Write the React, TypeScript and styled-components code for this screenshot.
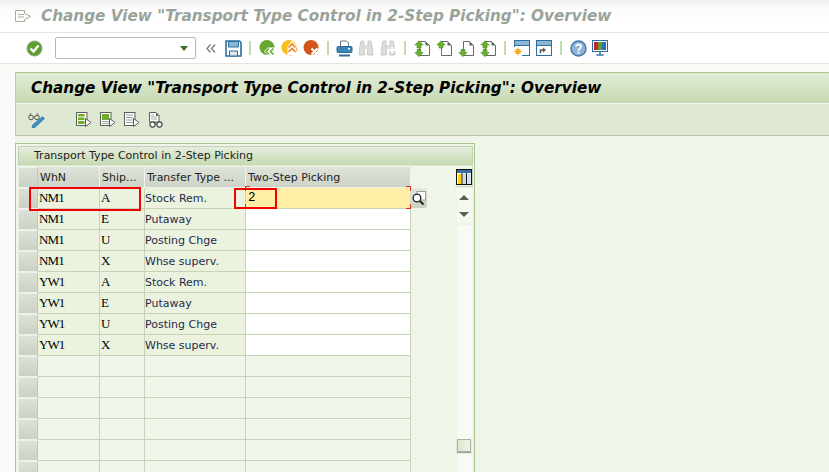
import React from 'react';
import styled, { createGlobalStyle } from 'styled-components';

const Global = createGlobalStyle`
  html, body { margin: 0; padding: 0; background: #fafbf8; }
  * { box-sizing: border-box; }
`;

const Page = styled.div`
  position: relative;
  width: 829px;
  height: 472px;
  overflow: hidden;
  background: #fafbf8;
  font-family: "DejaVu Sans", Verdana, sans-serif;
  color: #222;
`;

const TitleBar = styled.div`
  height: 33px;
  display: flex;
  align-items: center;
  gap: 10px;
  padding: 0 0 0 15px;
  background: linear-gradient(#eef1ec 0, #fbfcfb 9px, #ffffff 24px);
  border-bottom: 1px solid #e2e5df;
`;

const WindowTitle = styled.div`
  font-size: 15.25px;
  font-weight: 700;
  font-style: italic;
  color: #9aa39a;
  white-space: nowrap;
`;

const Toolbar = styled.div`
  height: 31px;
  display: flex;
  align-items: center;
  padding-left: 23px;
  background: #fff;
  border-bottom: 1px solid #e2e5df;
`;

const ToolButton = styled.div`
  width: 22px;
  height: 22px;
  display: flex;
  align-items: center;
  justify-content: center;
  flex: none;
`;

const Separator = styled.div<{ $w?: number }>`
  width: ${p => p.$w ?? 12}px;
  flex: none;
  display: flex;
  justify-content: center;
  &::before {
    content: '';
    width: 2px;
    height: 14px;
    background: #c5dbb0;
  }
`;

const CommandField = styled.div`
  width: 141px;
  height: 22px;
  margin: 0 4px 0 10px;
  border: 1px solid #b4b8b0;
  border-radius: 2px;
  background: #fff;
  display: flex;
  align-items: center;
  justify-content: flex-end;
  padding-right: 7px;
  flex: none;
  &::after {
    content: '';
    border-left: 4px solid transparent;
    border-right: 4px solid transparent;
    border-top: 5px solid #3f6b2c;
  }
`;

const Band = styled.div`
  height: 8px;
  background: #f8faf6;
`;

const Content = styled.div`
  margin-left: 15px;
  height: 400px;
  background: #eff5e9;
`;

const ScreenHeader = styled.div`
  height: 32px;
  display: flex;
  align-items: center;
  padding-left: 15px;
  background: linear-gradient(#e3ecd8 0, #c6d9b2 100%);
  border-top: 1px solid #a9c592;
  border-left: 1px solid #b9cfa5;
  border-bottom: 1px solid #f3f7ee;
  font-size: 15.25px;
  font-weight: 700;
  font-style: italic;
  color: #000;
  white-space: nowrap;
`;

const AppToolbar = styled.div`
  height: 32px;
  display: flex;
  align-items: center;
  padding-left: 8px;
  background: #dfe8d2;
  border-left: 1px solid #b9cfa5;
  border-bottom: 1px solid #b6caa4;
`;

const AppButton = styled.div<{ $gap?: number }>`
  width: 24px;
  height: 24px;
  margin-left: ${p => p.$gap ?? 0}px;
  display: flex;
  align-items: center;
  justify-content: center;
  flex: none;
`;

const TablePanel = styled.div`
  width: 460px;
  height: 340px;
  margin-top: 7px;
  border: 1px solid #a7c58e;
  border-bottom: none;
  padding: 2px 1px 0 2px;
`;

const PanelTitle = styled.div`
  height: 20px;
  display: flex;
  align-items: center;
  padding: 0 0 2px 15px;
  font-size: 11px;
  color: #222;
  background: linear-gradient(#e6eedd, #c6d9b2);
  border: 1px solid #c3d0b6;
  border-bottom-color: #dbe6cf;
  white-space: nowrap;
`;

const TableArea = styled.div`
  display: flex;
  margin-top: 1px;
`;

const Grid = styled.div`
  width: 393px;
  display: grid;
  grid-template-columns: 20px 62px 45px 101px 165px;
  grid-auto-rows: 21px;
  flex: none;
`;

const HeaderCell = styled.div`
  display: flex;
  align-items: center;
  padding-left: 2px;
  font-size: 11px;
  color: #222;
  white-space: nowrap;
  overflow: hidden;
  background: linear-gradient(#dfe3da, #cdd3c6);
  border-right: 1px solid #f2f4ef;
  border-bottom: 1px solid #eef1ea;
`;

const RowHandle = styled.div`
  background: linear-gradient(#dde1d8, #cbd1c4);
  border: 1px solid #eef1ea;
  border-right: 1px solid #b9ceaa;
  border-left: 1px solid #e8eee2;
`;

const Cell = styled.div<{ $kind: 'code' | 'text' | 'input' | 'focus' | 'empty' }>`
  display: flex;
  align-items: center;
  padding-left: ${p => (p.$kind === 'focus' ? 2 : p.$kind === 'text' ? 0 : 1)}px;
  white-space: nowrap;
  overflow: hidden;
  font-size: ${p => (p.$kind === 'code' ? 13 : p.$kind === 'focus' ? 12.5 : 11)}px;
  letter-spacing: ${p => (p.$kind === 'code' ? '-0.9px' : 'normal')};
  font-family: ${p =>
    p.$kind === 'code' ? '"Liberation Serif", serif' : p.$kind === 'focus' ? '"Liberation Mono", monospace' : 'inherit'};
  color: ${p => (p.$kind === 'text' ? '#1f2a4a' : '#000')};
  background: ${p =>
    p.$kind === 'input' ? '#fff' : p.$kind === 'focus' ? '#ffeea3' : p.$kind === 'empty' ? '#eff5e9' : '#ebf3df'};
  border-right: 1px solid #c5d3b7;
  border-bottom: 1px solid #c5d3b7;
`;

const ValueHelp = styled.div`
  position: absolute;
  left: 410px;
  top: 188px;
  width: 17px;
  height: 20px;
  display: flex;
  align-items: center;
  justify-content: center;
  background: linear-gradient(#e4e8de, #c9cfc2);
  border-radius: 0 2px 2px 0;
`;

const Corner = styled.div<{ $x: number; $y: number; $flipX?: boolean; $flipY?: boolean }>`
  position: absolute;
  left: ${p => p.$x}px;
  top: ${p => p.$y}px;
  width: 5px;
  height: 5px;
  border-color: #e03020;
  border-style: solid;
  border-width: ${p => (p.$flipY ? '0 0 1px' : '1px 0 0')};
  border-left-width: ${p => (p.$flipX ? 0 : 1)}px;
  border-right-width: ${p => (p.$flipX ? 1 : 0)}px;
`;

const ScrollColumn = styled.div`
  margin-left: 44px;
  width: 18px;
  display: flex;
  flex-direction: column;
  align-items: center;
`;

const ConfigButton = styled.div`
  width: 18px;
  height: 20px;
  display: flex;
  align-items: center;
  justify-content: center;
  border-right: 1px solid #c9cfc2;
  border-bottom: 1px solid #c9cfc2;
`;

const ScrollButton = styled.div<{ $up?: boolean }>`
  width: 15px;
  height: 16px;
  margin-top: ${p => (p.$up ? 2 : 1)}px;
  display: flex;
  align-items: center;
  justify-content: center;
  background: #f6f9f2;
  &::after {
    content: '';
    border-left: 5px solid transparent;
    border-right: 5px solid transparent;
    border-${p => (p.$up ? 'bottom' : 'top')}: 5px solid #56614f;
  }
`;

const ScrollTrack = styled.div`
  width: 15px;
  height: 270px;
  margin-top: 3px;
  padding-top: 214px;
  background: #f8faf6;
  display: flex;
  justify-content: center;
`;

const ScrollThumb = styled.div`
  width: 14px;
  height: 13px;
  background: linear-gradient(90deg, #dbe6cf, #eef4e6);
  border: 1px solid #a9b3a0;
  box-shadow: 0 1px 1px #9aa392;
`;

const Highlight = styled.div<{ $x: number; $y: number; $w: number; $h: number }>`
  position: absolute;
  left: ${p => p.$x}px;
  top: ${p => p.$y}px;
  width: ${p => p.$w}px;
  height: ${p => p.$h}px;
  border: 2px solid #f00000;
`;

const Check = () => (
  <svg width="17" height="17" viewBox="0 0 17 17">
    <circle cx="8.5" cy="8.5" r="7.5" fill="#5f9f32" stroke="#8fa584" strokeWidth="1" />
    <path d="M4.500 8.500l3 3 5-6" fill="none" stroke="#fff" strokeWidth="2.400" />
  </svg>
);

const DoubleLeft = () => (
  <svg width="10" height="9" viewBox="0 0 10 9">
    <path d="M4.500.5L1 4.500l3.500 4M9 .5L5.500 4.500 9 8.500" fill="none" stroke="#767d74" strokeWidth="1.300" />
  </svg>
);

const Save = () => (
  <svg width="17" height="17" viewBox="0 0 17 17">
    <path d="M1 1h13.500L16 2.500V16H1z" fill="#fff" stroke="#2a6f9e" strokeWidth="1.600" />
    <path d="M3.500 1.500h10v5.500h-10z" fill="#8eb6d3" stroke="#2a6f9e" />
    <path d="M4.500 11h8v5h-8z" fill="#dce7ef" stroke="#2a6f9e" />
  </svg>
);

const Back = () => (
  <svg width="17" height="16" viewBox="0 0 17 16">
    <circle cx="8" cy="7.500" r="7.500" fill="#66a832" />
    <path d="M5 11.500l4-4h7v8H9z" fill="#fff" />
    <path d="M10 8.500l-3 3 3 3M14.500 8.500l-3 3 3 3" fill="none" stroke="#66a832" strokeWidth="1.600" />
  </svg>
);

const Exit = () => (
  <svg width="17" height="16" viewBox="0 0 17 16">
    <circle cx="8" cy="7.500" r="7.500" fill="#fbbb1b" />
    <path d="M16 7.500A7.500 7.500 0 0 1 8 15" fill="none" stroke="#ee7f1a" strokeWidth="1.500" />
    <path d="M11 1l4.500 5v9.500h-9V6z" fill="#fff" />
    <path d="M7.500 7.500l3.500-3.500 3.500 3.500M7.500 12l3.500-3.500 3.500 3.500" fill="none" stroke="#ee7f1a" strokeWidth="1.600" />
  </svg>
);

const Cancel = () => (
  <svg width="17" height="16" viewBox="0 0 17 16">
    <circle cx="8" cy="7.500" r="7.500" fill="#d2551c" />
    <path d="M8.500 8.500l6 6M14.500 8.500l-6 6" stroke="#fff" strokeWidth="2.200" />
  </svg>
);

const Print = () => (
  <svg width="17" height="17" viewBox="0 0 17 17">
    <path d="M4.500 6.500V1h6l2 2v3.500" fill="#fff" stroke="#6c7478" />
    <rect x="1" y="6.500" width="15" height="6" rx="1" fill="#3b86b4" stroke="#2a6f9e" />
    <rect x="12" y="8" width="2" height="1.500" fill="#fff" />
    <path d="M3 14.500h11v2H3z" fill="#2a6f9e" />
  </svg>
);

const Find = ({ plus }: { plus?: boolean }) => (
  <svg width="16" height="16" viewBox="0 0 16 16">
    <path d="M2 6l1-5h3v5l.5 9H1zM14 6l-1-5h-3v5l-.5 9H15z" fill="#dcdedb" stroke="#c8cbc6" />
    <rect x="6" y="5" width="4" height="4" fill="#dcdedb" />
    {plus && <path d="M12 7v6M9 10h6" stroke="#fff" strokeWidth="2" />}
  </svg>
);

const upArrow = 'M5 .8L9.200 5H7v3H3V5H.8z';
const downArrow = 'M3 9.500h4v3h2.200L5 16.700.8 12.500H3z';

const PageArrows = ({ up, down }: { up?: boolean; down?: boolean }) => (
  <svg width="17" height="17" viewBox="0 0 17 17">
    <path d="M5.500 1.500h6l4 4v10h-10z" fill="#fff" stroke="#666a66" />
    <path d="M11.500 1.500v4h4z" fill="#666a66" />
    {up && <path d={upArrow} fill="#6cb02e" stroke="#3f7a22" strokeWidth=".5" />}
    {down && <path d={downArrow} fill="#6cb02e" stroke="#3f7a22" strokeWidth=".5" />}
  </svg>
);

const NewSession = () => (
  <svg width="16" height="16" viewBox="0 0 16 16">
    <rect x=".5" y=".5" width="15" height="15" fill="#fff" stroke="#2a6f9e" />
    <rect x="1" y="1" width="14" height="4" fill="#8eb6d3" />
    <path d="M0 5.500h16" stroke="#2a6f9e" />
    <rect x="0" y="7" width="8" height="9" fill="#fff" />
    <circle cx="4" cy="11.500" r="2.500" fill="#f7a81b" />
    <path d="M4 7.500v8M0 11.500h8M1.500 9l5 5M6.500 9l-5 5" stroke="#f7a81b" />
  </svg>
);

const Shortcut = () => (
  <svg width="16" height="16" viewBox="0 0 16 16">
    <rect x=".5" y=".5" width="15" height="15" fill="#fff" stroke="#2a6f9e" />
    <rect x="1" y="1" width="14" height="4" fill="#8eb6d3" />
    <path d="M0 5.500h16" stroke="#2a6f9e" />
    <path d="M4.500 13v-3h3" fill="none" stroke="#555" strokeWidth="1.600" />
    <path d="M7 7.500l3 2.500-3 2.500z" fill="#555" />
  </svg>
);

const Help = () => (
  <svg width="17" height="17" viewBox="0 0 17 17">
    <circle cx="8.500" cy="8.500" r="7.500" fill="#8fb3d4" stroke="#3c79a8" strokeWidth="1.400" />
    <path d="M6 6.500C6 3.800 11 3.800 11 6.500c0 2-2.500 1.800-2.500 4" fill="none" stroke="#fff" strokeWidth="1.800" />
    <rect x="7.500" y="11.500" width="2" height="2" fill="#fff" />
  </svg>
);

const Layout = () => (
  <svg width="16" height="16" viewBox="0 0 16 16">
    <rect x=".5" y=".5" width="15" height="11" fill="#fff" stroke="#2a6f9e" />
    <rect x="2" y="2" width="4" height="8" fill="#c9252b" />
    <rect x="6" y="2" width="4" height="8" fill="#5f9f32" />
    <rect x="10" y="2" width="4" height="8" fill="#2f6fb3" />
    <path d="M8 12v2M4.500 15h7" stroke="#2a6f9e" strokeWidth="1.600" />
  </svg>
);

const Doc = ({ fill }: { fill: 'lines' | 'block' | 'none' }) => (
  <svg width="16" height="15" viewBox="0 0 16 15">
    <rect x=".5" y=".5" width="10.500" height="13" fill="#fff" stroke="#5b5f5b" />
    {fill === 'lines' && <path d="M2 2h6.500v2.500H2zM2 5.500h6.500V8H2zM2 9h6.500v3H2z" fill="#6fae2a" />}
    {fill === 'block' && (
      <>
        <path d="M2 2h7v6H2z" fill="#6fae2a" />
        <path d="M2 9.500h7M2 11.500h7" stroke="#8a8e8a" strokeWidth=".8" />
      </>
    )}
    {fill === 'none' && <path d="M2 3h7M2 5.500h7M2 8h7M2 10.500h7" stroke="#9a9e9a" strokeWidth="1" />}
    <path d="M9.500 6.500l5.500 4-5.500 4z" fill="#fff" stroke="#5b5f5b" />
  </svg>
);

const GlassesDoc = () => (
  <svg width="16" height="16" viewBox="0 0 16 16">
    <path d="M1.500.5H8l3 3V10H1.500z" fill="#fff" stroke="#5b5f5b" />
    <path d="M8 .5V4h3z" fill="#5b5f5b" />
    <path d="M3 3h3M3 5h6M3 7h6" stroke="#8a8e8a" strokeWidth=".8" />
    <circle cx="4.500" cy="12.500" r="2.600" fill="#fff" stroke="#444" strokeWidth="1.100" />
    <circle cx="11.500" cy="12.500" r="2.600" fill="#fff" stroke="#444" strokeWidth="1.100" />
    <path d="M7 12h2" stroke="#444" />
  </svg>
);

const GlassesPencil = () => (
  <svg width="17" height="16" viewBox="0 0 17 16">
    <circle cx="3" cy="5.500" r="2.300" fill="none" stroke="#555" />
    <circle cx="9" cy="5.500" r="2.300" fill="none" stroke="#555" />
    <path d="M5.300 5h1.400M1.500 3.500L3 1M10.500 3.500L9 1" stroke="#555" strokeWidth=".8" />
    <path d="M14.500 4.500L16.500 6.500 7 15.500 4 16l.5-3z" fill="#3d8fc4" stroke="#2a6f9e" strokeWidth=".6" />
  </svg>
);

const WindowIcon = () => (
  <svg width="16" height="13" viewBox="0 0 16 13">
    <path d="M.5.5h9v3l6 3-6 3v2h-9z" fill="none" stroke="#9fb08f" />
    <path d="M3 4.500h6M3 7h6" stroke="#9fb08f" />
  </svg>
);

const Magnifier = () => (
  <svg width="15" height="15" viewBox="0 0 15 15">
    <rect x="6" y=".5" width="8.500" height="8.500" fill="#fff" stroke="#9aa392" />
    <circle cx="6" cy="7" r="3.800" fill="#fff" stroke="#222" strokeWidth="1.300" />
    <path d="M9 10l3.500 3.500" stroke="#222" strokeWidth="2" />
  </svg>
);

const TableConfig = () => (
  <svg width="16" height="16" viewBox="0 0 16 16">
    <rect x=".5" y=".5" width="15" height="15" fill="#fff" stroke="#111" />
    <rect x="1" y="1" width="14" height="3" fill="#3b6ea5" />
    <rect x="2" y="5" width="3.500" height="10" fill="#ffd21f" />
    <path d="M6 4v11M10.500 4v11" stroke="#111" />
    <rect x="7" y="5" width="3" height="10" fill="#c9dbe9" />
    <rect x="11.500" y="5" width="3" height="10" fill="#c9dbe9" />
  </svg>
);

const title = 'Change View "Transport Type Control in 2-Step Picking": Overview';

const rows = [
  ['NM1', 'A', 'Stock Rem.'],
  ['NM1', 'E', 'Putaway'],
  ['NM1', 'U', 'Posting Chge'],
  ['NM1', 'X', 'Whse superv.'],
  ['YW1', 'A', 'Stock Rem.'],
  ['YW1', 'E', 'Putaway'],
  ['YW1', 'U', 'Posting Chge'],
  ['YW1', 'X', 'Whse superv.'],
];

const emptyRows = [0, 1, 2, 3, 4, 5, 6];

export default function App() {
  return (
    <Page>
      <Global />
      <TitleBar>
        <WindowIcon />
        <WindowTitle>{title}</WindowTitle>
      </TitleBar>
      <Toolbar>
        <ToolButton><Check /></ToolButton>
        <CommandField />
        <ToolButton><DoubleLeft /></ToolButton>
        <ToolButton><Save /></ToolButton>
        <Separator />
        <ToolButton><Back /></ToolButton>
        <ToolButton><Exit /></ToolButton>
        <ToolButton><Cancel /></ToolButton>
        <Separator $w={11} />
        <ToolButton><Print /></ToolButton>
        <ToolButton><Find /></ToolButton>
        <ToolButton><Find plus /></ToolButton>
        <Separator />
        <ToolButton><PageArrows up down /></ToolButton>
        <ToolButton><PageArrows up /></ToolButton>
        <ToolButton><PageArrows down /></ToolButton>
        <ToolButton><PageArrows up down /></ToolButton>
        <Separator />
        <ToolButton><NewSession /></ToolButton>
        <ToolButton><Shortcut /></ToolButton>
        <Separator />
        <ToolButton><Help /></ToolButton>
        <ToolButton><Layout /></ToolButton>
      </Toolbar>
      <Band />
      <Content>
        <ScreenHeader>{title}</ScreenHeader>
        <AppToolbar>
          <AppButton><GlassesPencil /></AppButton>
          <AppButton $gap={24}><Doc fill="lines" /></AppButton>
          <AppButton><Doc fill="block" /></AppButton>
          <AppButton><Doc fill="none" /></AppButton>
          <AppButton><GlassesDoc /></AppButton>
        </AppToolbar>
        <TablePanel>
          <PanelTitle>Transport Type Control in 2-Step Picking</PanelTitle>
          <TableArea>
            <Grid>
              <RowHandle />
              <HeaderCell>WhN</HeaderCell>
              <HeaderCell>Ship...</HeaderCell>
              <HeaderCell>Transfer Type ...</HeaderCell>
              <HeaderCell>Two-Step Picking</HeaderCell>
              {rows.map((r, i) => (
                <React.Fragment key={i}>
                  <RowHandle />
                  <Cell $kind="code">{r[0]}</Cell>
                  <Cell $kind="code">{r[1]}</Cell>
                  <Cell $kind="text">{r[2]}</Cell>
                  {i === 0 ? <Cell $kind="focus">2</Cell> : <Cell $kind="input" />}
                </React.Fragment>
              ))}
              {emptyRows.map(i => (
                <React.Fragment key={i}>
                  <RowHandle />
                  <Cell $kind="empty" />
                  <Cell $kind="empty" />
                  <Cell $kind="empty" />
                  <Cell $kind="empty" />
                </React.Fragment>
              ))}
            </Grid>
            <ScrollColumn>
              <ConfigButton><TableConfig /></ConfigButton>
              <ScrollButton $up />
              <ScrollButton />
              <ScrollTrack><ScrollThumb /></ScrollTrack>
            </ScrollColumn>
          </TableArea>
        </TablePanel>
      </Content>
      <ValueHelp><Magnifier /></ValueHelp>
      <Corner $x={245} $y={186} />
      <Corner $x={406} $y={186} $flipX />
      <Corner $x={245} $y={204} $flipY />
      <Corner $x={406} $y={204} $flipX $flipY />
      <Highlight $x={29} $y={187} $w={112} $h={24} />
      <Highlight $x={234} $y={188} $w={43} $h={21} />
    </Page>
  );
}
